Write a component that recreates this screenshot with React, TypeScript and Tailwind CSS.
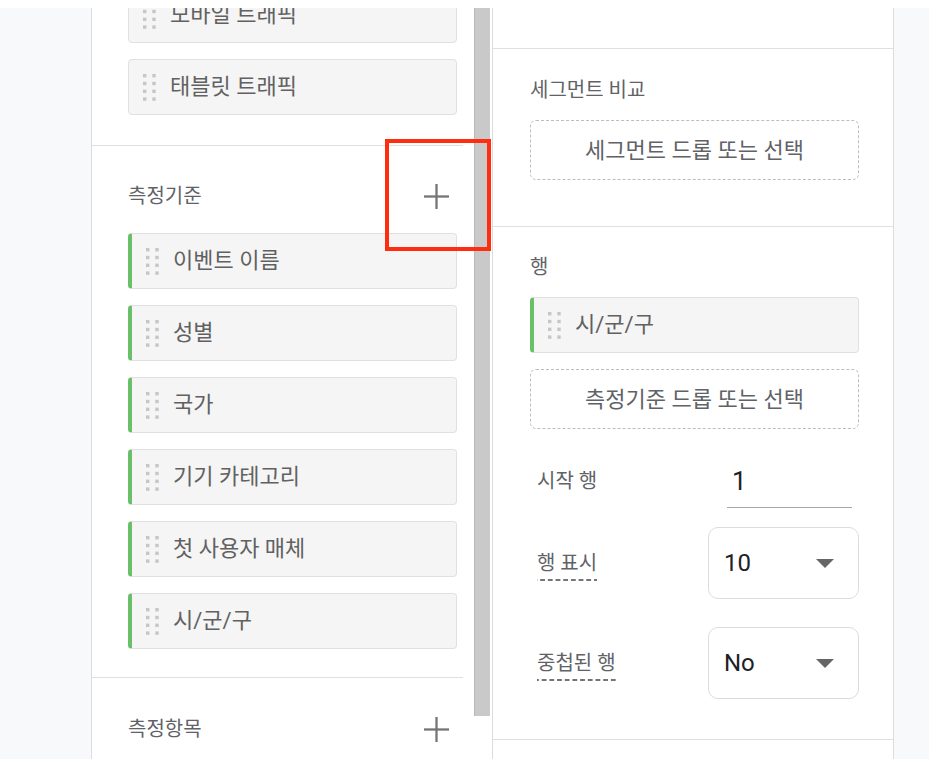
import React from "react";

function Handle() {
  const rects: React.ReactElement[] = [];
  for (let r = 0; r < 4; r++) {
    for (let c = 0; c < 2; c++) {
      rects.push(
        <rect key={`${r}-${c}`} x={c * 9.3} y={r * 7.8} width="3.4" height="3.4" fill="#c6c6c6" />
      );
    }
  }
  return (
    <svg width="13" height="27" viewBox="0 0 13 27" className="shrink-0">
      {rects}
    </svg>
  );
}

function Chip({ label, accent }: { label: string; accent?: boolean }) {
  return (
    <div
      className={
        accent
          ? "flex h-[56px] items-center gap-[14px] rounded-[4px] border border-l-[4px] border-[#e0e0e0] border-l-[#6abf69] bg-[#f5f5f5] pl-[14px]"
          : "flex h-[56px] items-center gap-[14px] rounded-[4px] border border-[#e0e0e0] bg-[#f5f5f5] pl-[14px]"
      }
    >
      <Handle />
      <span className="text-[22px] leading-[28px] text-[#616161]">{label}</span>
    </div>
  );
}

function Plus() {
  return (
    <svg width="25" height="25" viewBox="0 0 25 25">
      <line x1="12.5" y1="0" x2="12.5" y2="25" stroke="#757575" strokeWidth="2.3" />
      <line x1="0" y1="12.5" x2="25" y2="12.5" stroke="#757575" strokeWidth="2.3" />
    </svg>
  );
}

function Arrow() {
  return (
    <svg width="18" height="9" viewBox="0 0 18 9">
      <polygon points="0,0 18,0 9,9" fill="#666666" />
    </svg>
  );
}

function DashedBox({ text }: { text: string }) {
  return (
    <div className="flex h-[60px] items-center justify-center rounded-[6px] border border-dashed border-[#bdbdbd] text-[22px] text-[#5f6368]">
      {text}
    </div>
  );
}

function DottedLabel({ text }: { text: string }) {
  return (
    <span className="inline-block bg-[linear-gradient(to_right,#757575_65%,transparent_0)] bg-[length:7.7px_1.6px] bg-bottom bg-repeat-x pb-[6px] pt-[6px] text-[20px] leading-[24px] text-[#5f6368]">
      {text}
    </span>
  );
}

function Select({ value }: { value: string }) {
  return (
    <div className="flex h-[72px] w-[151px] items-center justify-between rounded-[10px] border border-[#dadce0] pl-[15px] pr-[24px]">
      <span className="text-[24px] leading-[28px] text-[#202124]">{value}</span>
      <Arrow />
    </div>
  );
}

export default function App() {
  return (
    <div className="min-h-screen bg-white font-[Roboto,'Noto_Sans_CJK_KR',sans-serif]">
      <div className="relative mt-[8px] flex h-[751px] overflow-hidden">
        {/* left gray gutter */}
        <div className="w-[92px] shrink-0 border-r border-[#dadce0] bg-[#f8f9fa]" />

        {/* left panel */}
        <div className="flex w-[400px] shrink-0 bg-white">
          <div className="w-[371px] shrink-0 overflow-hidden">
            <div className="-mt-[21px]">
              <div className="flex flex-col gap-[16px] border-b border-[#e0e0e0] pb-[30px] pl-[36px] pr-[6px]">
                <Chip label="모바일 트래픽" />
                <Chip label="태블릿 트래픽" />
              </div>

              <div className="border-b border-[#e0e0e0] pb-[28px] pt-[30px]">
                <div className="flex h-[40px] items-center justify-between pl-[36px] pr-[14px]">
                  <span className="text-[20px] text-[#5f6368]">측정기준</span>
                  <Plus />
                </div>
                <div className="mt-[17px] flex flex-col gap-[16px] pl-[36px] pr-[6px]">
                  <Chip label="이벤트 이름" accent />
                  <Chip label="성별" accent />
                  <Chip label="국가" accent />
                  <Chip label="기기 카테고리" accent />
                  <Chip label="첫 사용자 매체" accent />
                  <Chip label="시/군/구" accent />
                </div>
              </div>

              <div className="pt-[31px]">
                <div className="flex h-[40px] items-center justify-between pl-[36px] pr-[14px]">
                  <span className="text-[20px] text-[#5f6368]">측정항목</span>
                  <Plus />
                </div>
              </div>
            </div>
          </div>
          <div className="w-[11px] shrink-0" />
          <div className="w-[16px] shrink-0">
            <div className="h-[708px] border-l border-[#b9b9b9] bg-[#c9c9c9]" />
          </div>
          <div className="w-[2px] shrink-0" />
        </div>

        {/* right panel */}
        <div className="w-[402px] shrink-0 border-x border-[#dadce0] bg-white">
          <div className="h-[41px] border-b border-[#e0e0e0]" />

          <div className="border-b border-[#e0e0e0] pb-[46px] pl-[37px] pr-[34px] pt-[29px]">
            <div className="text-[20px] leading-[24px] text-[#5f6368]">세그먼트 비교</div>
            <div className="mt-[18px]">
              <DashedBox text="세그먼트 드롭 또는 선택" />
            </div>
          </div>

          <div className="border-b border-[#e0e0e0] pb-[40px] pl-[37px] pr-[34px] pt-[28px]">
            <div className="text-[20px] leading-[24px] text-[#5f6368]">행</div>
            <div className="mt-[18px]">
              <Chip label="시/군/구" accent />
            </div>
            <div className="mt-[16px]">
              <DashedBox text="측정기준 드롭 또는 선택" />
            </div>

            <div className="mt-[20px] flex h-[64px] items-center">
              <div className="w-[178px] shrink-0 pl-[7px] text-[20px] leading-[24px] text-[#5f6368]">
                시작 행
              </div>
              <div className="ml-[19px] h-[53px] w-[125px] border-b border-[#a8a8a8] pl-[5px] text-[26px] leading-[52px] text-[#202124]">
                1
              </div>
            </div>

            <div className="mt-[14px] flex h-[72px] items-center">
              <div className="w-[178px] shrink-0 pl-[7px]">
                <DottedLabel text="행 표시" />
              </div>
              <Select value="10" />
            </div>

            <div className="mt-[28px] flex h-[72px] items-center">
              <div className="w-[178px] shrink-0 pl-[7px]">
                <DottedLabel text="중첩된 행" />
              </div>
              <Select value="No" />
            </div>
          </div>
        </div>

        {/* right gray gutter */}
        <div className="flex-1 bg-[#f8f9fa]" />

        {/* annotation */}
        <div className="absolute left-[385px] top-[131px] h-[112px] w-[106px] border-[4px] border-[#ff2d10]" />
      </div>
    </div>
  );
}
